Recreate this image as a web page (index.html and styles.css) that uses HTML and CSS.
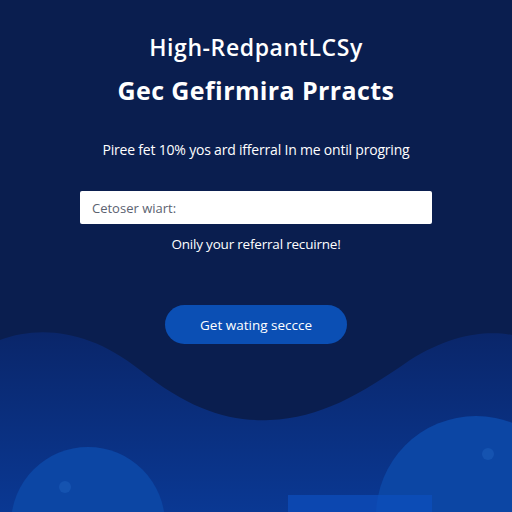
FILE: index.html
```html
<!DOCTYPE html>
<html lang="en">
<head>
    <meta charset="UTF-8">
    <meta name="viewport" content="width=device-width, initial-scale=1.0">
    <title>Referral Program</title>
    <link rel="stylesheet" href="styles.css">
</head>
<body>
    <!-- decorative waves and bubbles behind the content -->
    <svg class="backdrop" width="512" height="512" viewBox="0 0 512 512">
        <defs>
            <linearGradient id="waveFill" x1="0" y1="0" x2="0" y2="1">
                <stop offset="0" stop-color="#0a266a"/>
                <stop offset="1" stop-color="#0a3893"/>
            </linearGradient>
        </defs>
        <path d="M0 340 C40 325 90 330 140 370 C190 410 230 422 270 420 C320 418 360 395 410 360 C450 335 485 330 512 335 L512 512 L0 512 Z" fill="url(#waveFill)"/>
        <circle cx="88" cy="524" r="77" fill="#0c46a4"/>
        <circle cx="65" cy="487" r="6" fill="#1553b0"/>
        <circle cx="476" cy="516" r="100" fill="#0c46a4"/>
        <circle cx="488" cy="454" r="6" fill="#1553b0"/>
        <rect x="288" y="495" width="144" height="17" fill="#0d4fbd" opacity="0.7"/>
    </svg>

    <main class="container">
        <h2 class="brand">High-RedpantLCSy</h2>
        <h1 class="headline">Gec Gefirmira Prracts</h1>

        <p class="lead">Piree fet 10% yos ard ifferral In me ontil progring</p>

        <input class="field" type="text" placeholder="Cetoser wiart:">
        <p class="note">Onily your referral recuirne!</p>

        <button class="cta">Get wating seccce</button>
    </main>
</body>
</html>
```

FILE: styles.css
```css
* {
    margin: 0;
    padding: 0;
    box-sizing: border-box;
}

body {
    font-family: "Open Sans", "Liberation Sans", sans-serif;
    background: #0a1e4f;
    width: 512px;
    height: 512px;
    overflow: hidden;
    position: relative;
    color: #ffffff;
}

.backdrop {
    position: absolute;
    left: 0;
    top: 0;
}

.container {
    position: relative;
    display: flex;
    flex-direction: column;
    align-items: center;
    padding-top: 34px;
}

.brand {
    font-size: 23px;
    font-weight: 600;
    line-height: 26px;
    letter-spacing: 0.6px;
}

.headline {
    margin-top: 15px;
    font-size: 25px;
    font-weight: 700;
    line-height: 30px;
    letter-spacing: 0.4px;
}

.lead {
    margin-top: 36px;
    font-size: 14px;
    line-height: 18px;
    letter-spacing: -0.2px;
}

.field {
    margin-top: 32px;
    width: 352px;
    height: 33px;
    border: none;
    border-radius: 2px;
    background: #ffffff;
    padding: 0 12px;
    font-family: inherit;
    font-size: 13px;
    outline: none;
}

.field::placeholder {
    color: #5b6270;
}

.note {
    margin-top: 11px;
    font-size: 13.5px;
    line-height: 18px;
    letter-spacing: -0.2px;
}

.cta {
    margin-top: 52px;
    width: 182px;
    height: 39px;
    border: none;
    border-radius: 20px;
    background: #0b4fb4;
    color: #ffffff;
    font-family: inherit;
    font-size: 13.5px;
    font-weight: 500;
    cursor: pointer;
}
```
